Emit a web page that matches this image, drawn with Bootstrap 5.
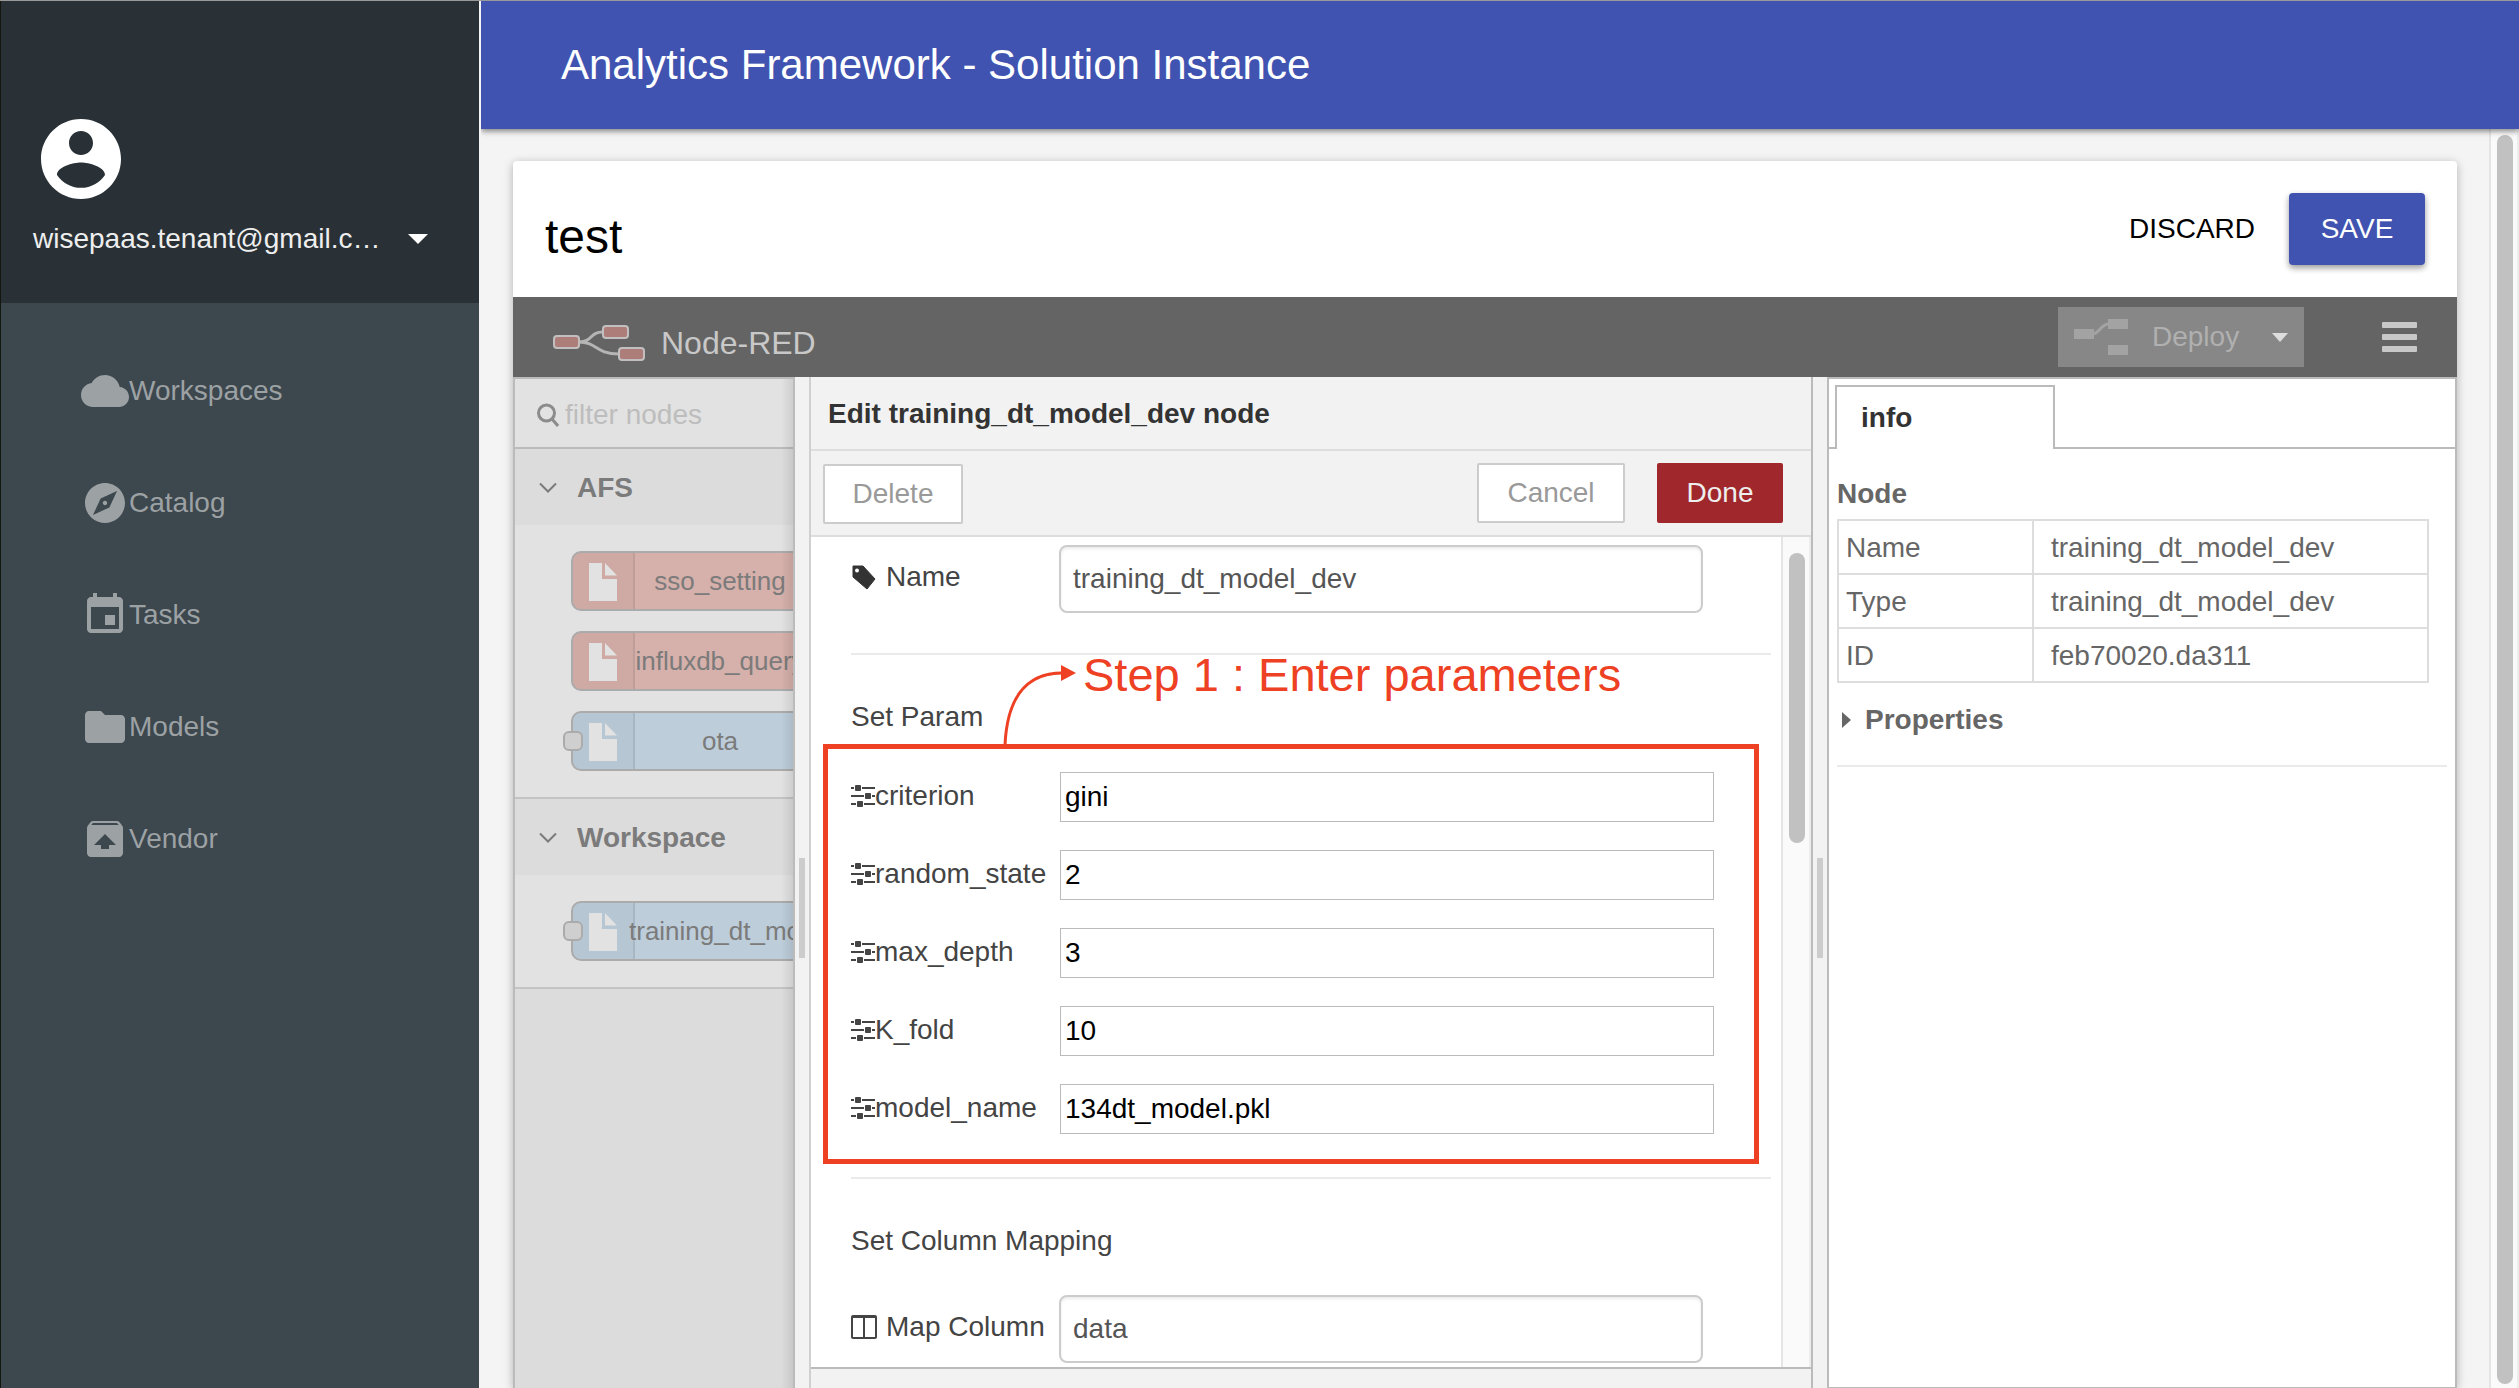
<!DOCTYPE html>
<html lang="en">
<head>
<meta charset="utf-8">
<meta name="viewport" content="width=device-width, initial-scale=1">
<title>Analytics Framework - Solution Instance</title>
<link href="https://cdn.jsdelivr.net/npm/bootstrap@5.3.0/dist/css/bootstrap.min.css" rel="stylesheet">
<style>
  body { font-family: "Liberation Sans", Arial, sans-serif; font-size: 28px; line-height: 40px; color: #444; background: #f4f4f4; border-top: 1px solid #999; }
  svg { display: block; flex: none; }
  button, .btn { font-size: 28px; line-height: 40px; }

  .side-menu { width: 481px; background: #3c474e; border-left: 1px solid #14170f; border-right: 2px solid #f4f4f4; }
  .account { height: 302px; padding: 110px 32px 0; background: #293136; color: #eee; }
  .account-btn { gap: 28px; color: #eee; }
  .menu-links { gap: 64px; padding: 64px 80px; }
  .menu-links a { color: #9ca1a4; line-height: 48px; }
  .menu-links svg { fill: #9ca1a4; }

  .app-bar { height: 128px; padding: 34px 80px; background: #4053b0; color: #fff; font-size: 42px; line-height: 60px; box-shadow: 0 2px 6px rgba(0,0,0,.5); z-index: 2; }
  .page-area { padding: 32px 32px 0; }
  .solution { border-radius: 4px 4px 0 0; background: #fff; box-shadow: 0 2px 10px rgba(0,0,0,.28); }
  .solution-head { height: 136px; padding: 0 32px; }
  .solution-head h1 { font-size: 48px; line-height: 56px; color: #000; padding-top: 16px; }
  .btn-flat { color: #000; padding: 16px 34px; }
  .btn-save { width: 136px; height: 72px; background: #4053b0; color: #fff; border-radius: 4px; box-shadow: 0 3px 6px rgba(0,0,0,.4); }
  .btn-save:hover { background: #4053b0; color: #fff; }

  .red-bar { height: 80px; padding: 0 40px; background: #646464; color: #c8c8c8; font-size: 32px; }
  .red-brand { gap: 16px; padding-top: 12px; }
  .deploy { width: 246px; height: 60px; padding: 0 16px; background: #878787; color: #b0b0b0; border: 0; }
  .bars-btn { margin-left: 78px; }

  .palette-pane { width: 282px; border: 2px solid #bbb; border-bottom: 0; background: #dcdcdc; color: #7b7b7b; overflow: hidden; position: relative; }
  .palette-pane::after { content: ""; position: absolute; top: 0; right: 0; bottom: 0; width: 12px; background: linear-gradient(to right, transparent, rgba(0,0,0,.09)); }
  .filter-row { height: 70px; padding: 4px 22px 0; gap: 6px; background: #e2e2e2; border-bottom: 2px solid #bbb; }
  .filter-row input { border: 0; background: transparent; width: 100%; padding: 0; line-height: 40px; outline: 0; }
  .filter-row input::placeholder { color: #bdbdbd; opacity: 1; }
  .group-head { height: 76px; padding: 2px 24px 0; gap: 20px; font-weight: 700; color: #7b7b7b; }
  .group-body { padding: 26px 0 26px 56px; gap: 20px; background: #e2e2e2; border-bottom: 2px solid #c4c4c4; }
  .flow-node { width: 240px; height: 60px; border: 2px solid #ababab; border-radius: 10px; font-size: 26px; position: relative; white-space: nowrap; }
  .flow-node.rosy { background: #d6b0aa; }
  .flow-node.azure { background: #bdcdda; }
  .flow-icon { width: 62px; flex: none; height: 56px; background: rgba(0,0,0,.03); border-right: 2px solid rgba(0,0,0,.08); border-radius: 8px 0 0 8px; padding: 10px 0 0 16px; }
  .flow-label { flex: 1 1 0; text-align: center; margin: 0 -6px; padding-right: 4px; }
  .flow-port { position: absolute; left: -10px; top: 18px; width: 20px; height: 20px; border: 2px solid #ababab; border-radius: 6px; background: #cfcfcf; }

  .splitter { width: 14px; background: #f2f2f2; }
  .grip { width: 6px; height: 100px; margin-top: 50px; background: #ccc; }

  .tray { background: #f2f2f2; border-left: 2px solid #d0d0d0; border-right: 2px solid #bbb; min-width: 0; }
  .tray-title { height: 74px; padding: 17px; border-bottom: 2px solid #ddd; font-weight: 700; color: #333; }
  .tray-tools { height: 86px; padding: 0 28px 0 12px; border-bottom: 2px solid #ddd; }
  .tool-btn { width: 148px; height: 60px; padding: 0; border: 2px solid #ccc; border-radius: 2px; background: #fff; color: #999; }
  .tool-delete { width: 140px; margin-top: 2px; }
  .tool-done { width: 126px; margin-left: 32px; background: #a0282c; border-color: #a0282c; color: #eee; }
  .tray-form { padding: 8px 10px 0 40px; min-width: 0; overflow: hidden; background: #fff; }
  .tray-form hr, .info-pane hr { height: 2px; margin: 0; border: 0; background: #eaeaea; opacity: 1; }
  .form-row { height: 68px; }
  .form-row label { width: 208px; padding-top: 12px; gap: 9px; flex: none; }
  .form-row input { flex: 1; min-width: 0; margin-right: 68px; border: 2px solid #ccc; border-radius: 8px; padding: 0 12px; color: #555; box-shadow: inset 0 2px 3px rgba(0,0,0,.08); }
  .name-row { margin-bottom: 40px; }
  .set-title { padding-top: 42px; }
  .map-row { margin-top: 34px; }
  .param-list { gap: 28px; margin: 35px 0 43px; position: relative; }
  .param-row { height: 50px; }
  .param-row label { width: 209px; padding-top: 4px; flex: none; }
  .param-row input { flex: 1; min-width: 0; margin-right: 57px; border: 1px solid #bbb; padding: 0 4px; color: #000; }
  .callout-box { position: absolute; top: -28px; right: 12px; bottom: -30px; left: -28px; border: 5px solid #ee4023; pointer-events: none; }
  .callout-note { position: absolute; bottom: calc(100% + 27px); left: 149px; height: 98px; color: #ee4023; font-size: 47px; line-height: 56px; white-space: nowrap; }
  .scroll-track { width: 30px; flex: none; background: #fafafa; border-left: 2px solid #e5e5e5; border-right: 2px solid #ececec; padding: 16px 0 0 6px; }
  .scroll-thumb { width: 16px; height: 290px; border-radius: 8px; background: #c1c1c1; }
  .tray-foot { height: 21px; border-top: 2px solid #bbb; }

  .info-pane { width: 630px; border: 2px solid #bbb; border-bottom-width: 1px; background: #fff; color: #666; }
  .tab-strip { height: 70px; padding: 6px 6px 0; border-bottom: 2px solid #bbb; }
  .tab-strip button { width: 220px; height: 64px; padding: 0 24px; border: 2px solid #bbb; border-bottom: 0; background: #fff; color: #333; font-weight: 700; text-align: left; }
  .info-body { padding: 25px 8px; }
  .info-body h2 { font-size: 28px; line-height: 40px; font-weight: 700; margin-bottom: 5px; }
  .prop-table { width: 592px; margin-bottom: 17px; border: 2px solid #ddd; border-collapse: collapse; color: #666; }
  .prop-table td, .prop-table th { height: 54px; padding: 2px 17px 0; border: 2px solid #ddd; font-weight: 400; }
  .prop-table th { width: 195px; padding: 2px 7px 0; }
  .props-link { gap: 14px; padding: 0 5px; margin-bottom: 25px; font-weight: 700; color: #666; }

  .page-scroll { width: 30px; flex: none; background: #fafafa; border-left: 2px solid #e5e5e5; border-right: 2px solid #ececec; padding: 6px 0 4px 6px; }
  .page-scroll .scroll-thumb { height: 100%; }
</style>
<script src="https://cdn.jsdelivr.net/npm/bootstrap@5.3.0/dist/js/bootstrap.bundle.min.js"></script>
</head>
<body class="d-flex vh-100 overflow-hidden">

<svg class="d-none">
  <symbol id="i-file" viewBox="0 0 28 38"><path d="M0 0h13v16h15v22H0z M16 0l12 12.500H16z" fill="#e2e2e2"/></symbol>
  <symbol id="i-sliders" viewBox="0 0 24 24"><path d="M0 4h3M11 4h13M0 12h13M21 12h3M0 20h5M13 20h11" stroke="#444" stroke-width="2"/><g fill="#444"><rect x="4" y="1" width="6" height="6" rx="1"/><rect x="14" y="9" width="6" height="6" rx="1"/><rect x="6" y="17" width="6" height="6" rx="1"/></g></symbol>
  <symbol id="i-down" viewBox="0 0 18 12"><path d="M1 1.500l8 8 8-8" fill="none" stroke="#7b7b7b" stroke-width="2"/></symbol>
</svg>

<aside class="side-menu flex-shrink-0">
  <div class="account">
    <svg width="96" height="96" viewBox="0 0 24 24" fill="#fff"><path d="M12 2C6.480 2 2 6.480 2 12s4.480 10 10 10 10-4.480 10-10S17.520 2 12 2zm0 3c1.660 0 3 1.340 3 3s-1.340 3-3 3-3-1.340-3-3 1.340-3 3-3zm0 14.200c-2.500 0-4.710-1.280-6-3.220.030-1.990 4-3.080 6-3.080 1.990 0 5.970 1.090 6 3.080-1.290 1.940-3.500 3.220-6 3.220z"/></svg>
    <button type="button" class="account-btn btn p-0 border-0 d-flex align-items-center mt-2 pt-1" data-bs-toggle="dropdown">
      <span>wisepaas.tenant@gmail.c…</span>
      <svg width="20" height="10" viewBox="0 0 20 10" fill="#fff"><path d="M0 0h20L10 10z"/></svg>
    </button>
  </div>
  <nav class="menu-links d-flex flex-column">
    <a href="#" class="d-flex text-decoration-none"><svg width="48" height="48" viewBox="0 0 24 24"><path d="M19.350 10.040C18.670 6.590 15.640 4 12 4 9.110 4 6.600 5.640 5.350 8.040 2.340 8.360 0 10.910 0 14c0 3.310 2.690 6 6 6h13c2.760 0 5-2.240 5-5 0-2.640-2.050-4.780-4.650-4.960z"/></svg>Workspaces</a>
    <a href="#" class="d-flex text-decoration-none"><svg width="48" height="48" viewBox="0 0 24 24"><path d="M12 10.900c-.61 0-1.100.49-1.100 1.100s.49 1.100 1.100 1.100c.61 0 1.100-.49 1.100-1.100s-.49-1.100-1.100-1.100zM12 2C6.480 2 2 6.480 2 12s4.480 10 10 10 10-4.480 10-10S17.520 2 12 2zm2.190 12.190L6 18l3.810-8.190L18 6l-3.810 8.190z"/></svg>Catalog</a>
    <a href="#" class="d-flex text-decoration-none"><svg width="48" height="48" viewBox="0 0 24 24"><path d="M17 12h-5v5h5v-5zM16 1v2H8V1H6v2H5c-1.110 0-1.990.9-1.990 2L3 19c0 1.100.89 2 2 2h14c1.100 0 2-.9 2-2V5c0-1.100-.9-2-2-2h-1V1h-2zm3 18H5V8h14v11z"/></svg>Tasks</a>
    <a href="#" class="d-flex text-decoration-none"><svg width="48" height="48" viewBox="0 0 24 24"><path d="M10 4H4c-1.100 0-1.990.9-1.990 2L2 18c0 1.100.9 2 2 2h16c1.100 0 2-.9 2-2V8c0-1.100-.9-2-2-2h-8l-2-2z"/></svg>Models</a>
    <a href="#" class="d-flex text-decoration-none"><svg width="48" height="48" viewBox="0 0 24 24"><path d="M20.550 5.220l-1.390-1.680C18.880 3.210 18.470 3 18 3H6c-.47 0-.88.21-1.150.55L3.460 5.220C3.170 5.570 3 6.010 3 6.500V19c0 1.100.89 2 2 2h14c1.100 0 2-.9 2-2V6.500c0-.49-.17-.93-.45-1.280zM12 9.500l5.500 5.500H14v2h-4v-2H6.500L12 9.500zM5.120 5l.82-1h12l.93 1H5.120z"/></svg>Vendor</a>
  </nav>
</aside>

<div class="d-flex flex-column flex-grow-1 overflow-hidden">
  <header class="app-bar position-relative flex-shrink-0">Analytics Framework - Solution Instance</header>

  <div class="d-flex flex-grow-1 overflow-hidden">
    <main class="page-area d-flex flex-column flex-grow-1 overflow-hidden">
      <section class="solution d-flex flex-column flex-grow-1 overflow-visible">
        <div class="solution-head d-flex justify-content-between align-items-center">
          <h1 class="m-0 fw-normal">test</h1>
          <div class="d-flex align-items-center">
            <button type="button" class="btn-flat btn border-0">DISCARD</button>
            <button type="button" class="btn-save btn border-0 p-0">SAVE</button>
          </div>
        </div>

        <div class="red-bar d-flex align-items-center justify-content-between">
          <div class="red-brand d-flex align-items-center">
            <svg width="92" height="36" viewBox="0 0 92 36"><path d="M26 17C40 17 36 7 50 7M26 17C44 17 42 29 66 29" fill="none" stroke="#b5b5b5" stroke-width="3"/><g fill="#ad7d7a" stroke="#c3bfbf" stroke-width="2"><rect x="1" y="11" width="25" height="12" rx="3"/><rect x="50" y="1" width="25" height="12" rx="3"/><rect x="66" y="23" width="25" height="12" rx="3"/></g></svg>
            <span>Node-RED</span>
          </div>
          <div class="d-flex align-items-center">
            <button type="button" class="deploy d-flex align-items-center">
              <svg width="54" height="36" viewBox="0 0 54 36"><path d="M18 15c8 0 8-10 17-10" fill="none" stroke="#a3a3a3" stroke-width="3"/><path d="M0 10h20v10H0zM34 0h20v10H34zM34 26h20v10H34z" fill="#a3a3a3"/></svg>
              <span class="ms-4">Deploy</span>
              <svg class="ms-auto" width="16" height="9" viewBox="0 0 16 9" fill="#ddd"><path d="M0 0h16L8 9z"/></svg>
            </button>
            <button type="button" class="bars-btn btn p-0 border-0" aria-label="Menu"><svg width="35" height="30" viewBox="0 0 35 30" fill="#c8c8c8"><rect width="35" height="6" rx="1"/><rect y="12" width="35" height="6" rx="1"/><rect y="24" width="35" height="6" rx="1"/></svg></button>
          </div>
        </div>

        <div class="d-flex flex-grow-1 overflow-hidden">
          <div class="palette-pane flex-shrink-0">
            <div class="filter-row d-flex align-items-center">
              <svg width="22" height="24" viewBox="0 0 22 24" fill="none" stroke="#8c8c8c" stroke-width="3"><circle cx="9.500" cy="10" r="8"/><path d="M15 16l6 7"/></svg>
              <input type="text" placeholder="filter nodes" aria-label="filter nodes">
            </div>
            <div class="group-head d-flex align-items-center"><svg width="18" height="12"><use href="#i-down"/></svg>AFS</div>
            <div class="group-body d-flex flex-column">
              <div class="flow-node rosy d-flex align-items-center"><div class="flow-icon"><svg width="28" height="38"><use href="#i-file"/></svg></div><div class="flow-label">sso_setting</div></div>
              <div class="flow-node rosy d-flex align-items-center"><div class="flow-icon"><svg width="28" height="38"><use href="#i-file"/></svg></div><div class="flow-label">influxdb_query</div></div>
              <div class="flow-node azure d-flex align-items-center"><div class="flow-icon"><svg width="28" height="38"><use href="#i-file"/></svg></div><div class="flow-label">ota</div><div class="flow-port"></div></div>
            </div>
            <div class="group-head d-flex align-items-center"><svg width="18" height="12"><use href="#i-down"/></svg>Workspace</div>
            <div class="group-body d-flex flex-column">
              <div class="flow-node azure d-flex align-items-center"><div class="flow-icon"><svg width="28" height="38"><use href="#i-file"/></svg></div><div class="flow-label">training_dt_model_dev</div><div class="flow-port"></div></div>
            </div>
          </div>

          <div class="splitter flex-shrink-0 d-flex align-items-center justify-content-center"><div class="grip"></div></div>

          <div class="tray d-flex flex-column flex-grow-1">
            <div class="tray-title">Edit training_dt_model_dev node</div>
            <div class="tray-tools d-flex align-items-center">
              <button type="button" class="tool-btn tool-delete me-auto">Delete</button>
              <button type="button" class="tool-btn">Cancel</button>
              <button type="button" class="tool-btn tool-done">Done</button>
            </div>
            <div class="d-flex flex-grow-1 overflow-hidden">
              <form class="tray-form flex-grow-1">
                <div class="form-row name-row d-flex">
                  <label for="node-name" class="d-flex"><svg class="mt-2" width="26" height="26" viewBox="0 0 26 26"><path d="M2 1h10l12 13-8 10L2 12z" fill="#333" stroke="#333" stroke-linejoin="round"/><circle cx="6" cy="5.500" r="2" fill="#fff"/></svg>Name</label>
                  <input id="node-name" type="text" value="training_dt_model_dev">
                </div>
                <hr>
                <div class="set-title">Set Param</div>
                <div class="param-list d-flex flex-column">
                  <div class="param-row d-flex"><label for="p1" class="d-flex"><svg class="mt-2" width="24" height="24"><use href="#i-sliders"/></svg>criterion</label><input id="p1" type="text" value="gini"></div>
                  <div class="param-row d-flex"><label for="p2" class="d-flex"><svg class="mt-2" width="24" height="24"><use href="#i-sliders"/></svg>random_state</label><input id="p2" type="text" value="2"></div>
                  <div class="param-row d-flex"><label for="p3" class="d-flex"><svg class="mt-2" width="24" height="24"><use href="#i-sliders"/></svg>max_depth</label><input id="p3" type="text" value="3"></div>
                  <div class="param-row d-flex"><label for="p4" class="d-flex"><svg class="mt-2" width="24" height="24"><use href="#i-sliders"/></svg>K_fold</label><input id="p4" type="text" value="10"></div>
                  <div class="param-row d-flex"><label for="p5" class="d-flex"><svg class="mt-2" width="24" height="24"><use href="#i-sliders"/></svg>model_name</label><input id="p5" type="text" value="134dt_model.pkl"></div>
                  <div class="callout-box"></div>
                  <div class="callout-note d-flex"><svg width="83" height="98" viewBox="0 0 83 98"><path d="M5 98C7 54 24 26 62 26" fill="none" stroke="#ee4023" stroke-width="3"/><path d="M61 18l15 8-15 8z" fill="#ee4023"/></svg>Step 1 : Enter parameters</div>
                </div>
                <hr>
                <div class="set-title">Set Column Mapping</div>
                <div class="form-row map-row d-flex">
                  <label for="map-col" class="d-flex"><svg class="mt-2" width="26" height="24" viewBox="0 0 26 24" fill="none" stroke="#444" stroke-width="2"><rect x="1" y="1" width="24" height="22" rx="1"/><path d="M13 1v22M1 2h24"/></svg>Map Column</label>
                  <input id="map-col" type="text" value="data">
                </div>
              </form>
              <div class="scroll-track"><div class="scroll-thumb"></div></div>
            </div>
            <div class="tray-foot flex-shrink-0"></div>
          </div>

          <div class="splitter flex-shrink-0 d-flex align-items-center justify-content-center"><div class="grip"></div></div>

          <div class="info-pane flex-shrink-0">
            <div class="tab-strip"><button type="button">info</button></div>
            <div class="info-body">
              <h2>Node</h2>
              <table class="prop-table">
                <tr><th scope="row">Name</th><td>training_dt_model_dev</td></tr>
                <tr><th scope="row">Type</th><td>training_dt_model_dev</td></tr>
                <tr><th scope="row">ID</th><td>feb70020.da311</td></tr>
              </table>
              <a href="#" class="props-link d-flex align-items-center text-decoration-none"><svg width="9" height="16" viewBox="0 0 9 16" fill="#666"><path d="M0 0l9 8-9 8z"/></svg>Properties</a>
              <hr>
            </div>
          </div>
        </div>
      </section>
    </main>
    <div class="page-scroll"><div class="scroll-thumb"></div></div>
  </div>
</div>
</body>
</html>
